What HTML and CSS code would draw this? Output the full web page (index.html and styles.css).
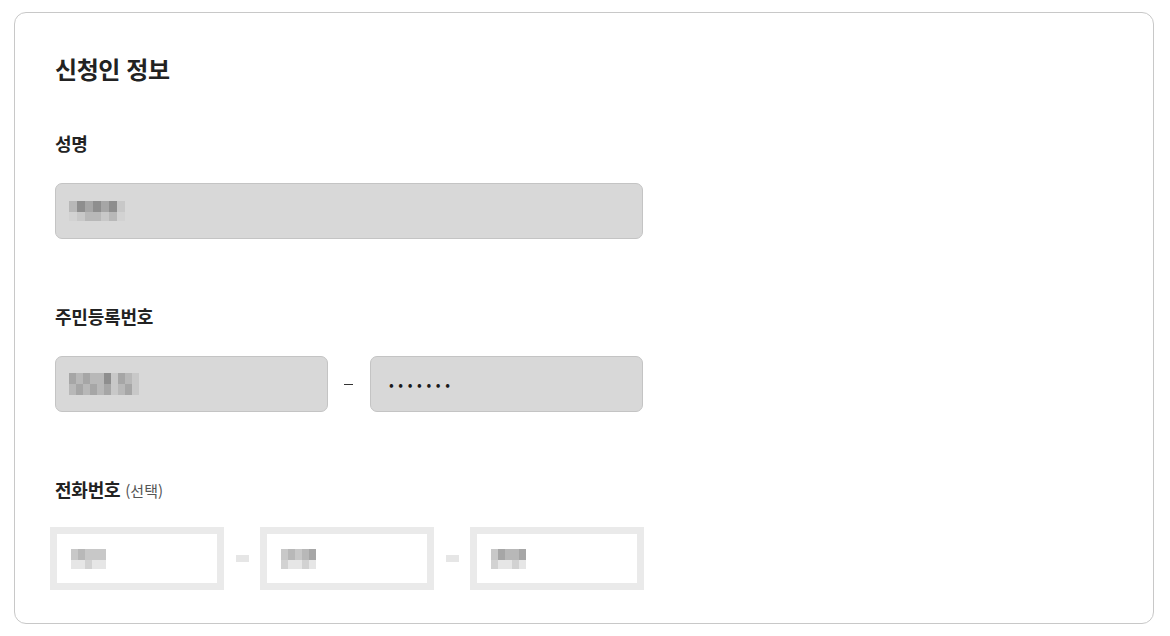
FILE: index.html
```html
<!DOCTYPE html>
<html lang="ko">
<head>
  <meta charset="UTF-8">
  <meta name="viewport" content="width=device-width, initial-scale=1.0">
  <title>신청인 정보</title>
  <link rel="stylesheet" href="styles.css">
</head>
<body>

  <div class="card">
    <h2 class="card-title">신청인 정보</h2>

    <!-- 성명 -->
    <div class="field">
      <div class="label">성명</div>
      <div class="input input-wide">
        <div class="mosaic">
          <i class="m3"></i><i class="m1"></i><i class="m2"></i><i class="m1"></i><i class="m2"></i><i class="m1"></i><i class="m4"></i>
          <i class="m5"></i><i class="m4"></i><i class="m3"></i><i class="m3"></i><i class="m4"></i><i class="m3"></i><i class="m5"></i>
        </div>
      </div>
    </div>

    <!-- 주민등록번호 -->
    <div class="field">
      <div class="label">주민등록번호</div>
      <div class="row">
        <div class="input input-half">
          <div class="mosaic mosaic-long">
            <i class="m2"></i><i class="m3"></i><i class="m2"></i><i class="m3"></i><i class="m3"></i><i class="m1"></i><i class="m4"></i><i class="m2"></i><i class="m3"></i><i class="m4"></i>
            <i class="m3"></i><i class="m2"></i><i class="m3"></i><i class="m2"></i><i class="m3"></i><i class="m2"></i><i class="m4"></i><i class="m3"></i><i class="m2"></i><i class="m4"></i>
          </div>
        </div>
        <span class="sep"><i class="sep-line"></i></span>
        <div class="input input-half">
          <span class="dots">•••••••</span>
        </div>
      </div>
    </div>

    <!-- 전화번호 -->
    <div class="field field-last">
      <div class="label label-phone">전화번호 <span class="optional">(선택)</span></div>
      <div class="row phone-row">
        <div class="phone-box">
          <div class="mosaic mosaic-short">
            <i class="m4"></i><i class="m3"></i><i class="m4"></i><i class="m4"></i><i class="m4"></i>
            <i class="m6"></i><i class="m6"></i><i class="m5"></i><i class="m6"></i><i class="m6"></i>
          </div>
        </div>
        <span class="phone-sep"></span>
        <div class="phone-box">
          <div class="mosaic mosaic-short">
            <i class="m4"></i><i class="m3"></i><i class="m4"></i><i class="m3"></i><i class="m2"></i><i class="m5"></i>
            <i class="m6"></i><i class="m6"></i><i class="m5"></i><i class="m6"></i><i class="m5"></i><i class="m6"></i>
          </div>
        </div>
        <span class="phone-sep"></span>
        <div class="phone-box">
          <div class="mosaic mosaic-short">
            <i class="m4"></i><i class="m2"></i><i class="m3"></i><i class="m3"></i><i class="m2"></i><i class="m5"></i>
            <i class="m6"></i><i class="m6"></i><i class="m5"></i><i class="m6"></i><i class="m5"></i><i class="m6"></i>
          </div>
        </div>
      </div>
    </div>
  </div>

</body>
</html>
```

FILE: styles.css
```css
body {
  margin: 0;
  padding: 12px 16px 12px 14px;
  font-family: "Noto Sans CJK KR", "Noto Sans", sans-serif;
  color: #222;
  background: #fff;
}
.card {
  height: 612px;
  box-sizing: border-box;
  border: 1px solid #c8c8c8;
  border-radius: 12px;
  padding: 40px 40px 0 40px;
}
.card-title {
  margin: 0 0 46px;
  font-size: 24px;
  font-weight: 700;
  line-height: 32px;
  letter-spacing: -0.4px;
}
.field {
  margin-bottom: 65px;
}
.label {
  font-size: 18px;
  font-weight: 700;
  line-height: 24px;
  margin-bottom: 28px;
  letter-spacing: -0.2px;
}
.label-phone {
  margin-bottom: 24px;
}
.optional {
  font-size: 15px;
  font-weight: 400;
  color: #555;
  letter-spacing: 0;
}
.row {
  display: flex;
  align-items: center;
}
.input {
  box-sizing: border-box;
  height: 56px;
  background: #d8d8d8;
  border: 1px solid #c4c4c4;
  border-radius: 7px;
  display: flex;
  align-items: center;
  padding-left: 13px;
}
.input-wide {
  width: 588px;
}
.input-half {
  width: 273px;
}
.sep {
  width: 42px;
  display: flex;
  justify-content: center;
}
.sep-line {
  display: block;
  width: 9px;
  height: 1px;
  background: #333;
  margin-left: -1px;
}
.dots {
  font-size: 14px;
  letter-spacing: 4.6px;
  color: #1a1a1a;
  padding-left: 5px;
}

/* 가려진 값 (모자이크) */
.mosaic {
  display: grid;
  grid-template-columns: repeat(7, 8px);
  grid-template-rows: 11px 9px;
}
.mosaic-long {
  grid-template-columns: repeat(10, 7px);
  grid-template-rows: 11px 11px;
}
.mosaic-short {
  grid-template-columns: repeat(5, 7px);
  grid-template-rows: 11px 9px;
}
.mosaic i { display: block; }
.m1 { background: #8e8e8e; }
.m2 { background: #a6a6a6; }
.m3 { background: #b8b8b8; }
.m4 { background: #c8c8c8; }
.m5 { background: #d2d2d2; }
.m6 { background: #e6e6e6; }

/* 전화번호 */
.field-last {
  margin-bottom: 0;
}
.phone-row {
  margin-left: -5px;
}
.phone-box {
  box-sizing: border-box;
  width: 174px;
  height: 63px;
  border: 7px solid #eaeaea;
  background: #fff;
  display: flex;
  align-items: center;
  padding-left: 14px;
}
.phone-sep {
  width: 13px;
  height: 7px;
  margin: 0 11px 0 12px;
  background: #e6e6e6;
}
```
